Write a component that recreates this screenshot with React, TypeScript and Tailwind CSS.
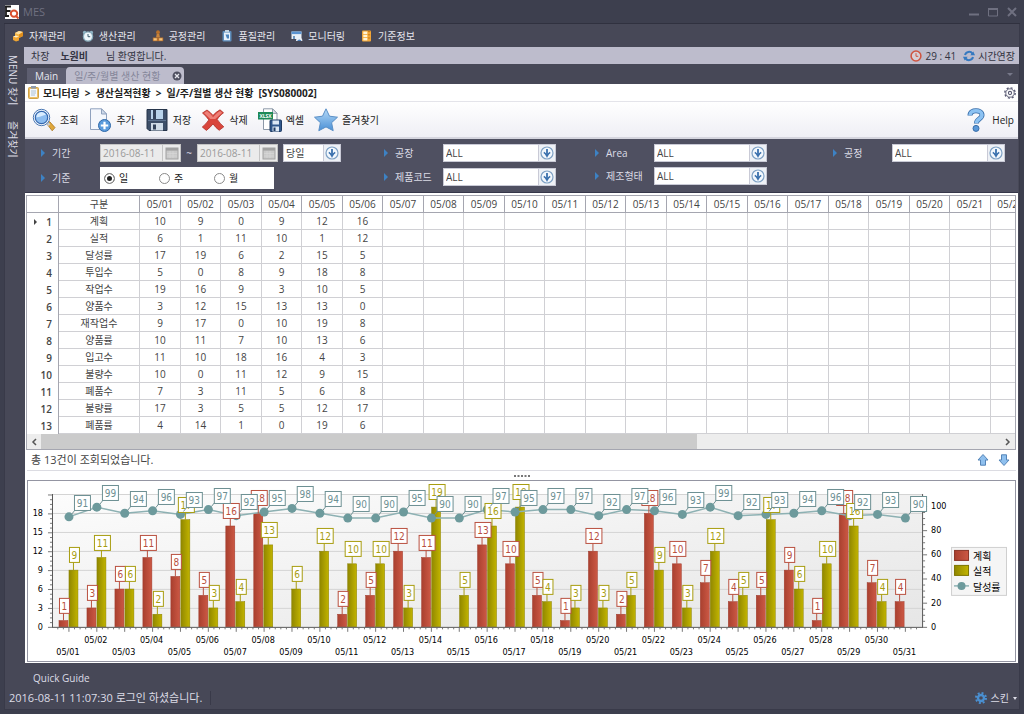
import { useState } from 'react';
import type { ReactNode } from 'react';

const menuItems = [
  { label: '자재관리', icon: <BoxIcon /> },
  { label: '생산관리', icon: <AlarmIcon /> },
  { label: '공정관리', icon: <ProcessIcon /> },
  { label: '품질관리', icon: <QualityIcon /> },
  { label: '모니터링', icon: <MonitorIcon /> },
  { label: '기준정보', icon: <BaseIcon /> },
];

const tools = [
  { label: '조회', icon: <SearchIcon /> },
  { label: '추가', icon: <AddIcon /> },
  { label: '저장', icon: <SaveIcon /> },
  { label: '삭제', icon: <DeleteIcon /> },
  { label: '엑셀', icon: <ExcelIcon /> },
  { label: '즐겨찾기', icon: <StarIcon /> },
];

const days = Array.from({ length: 31 }, (_, i) => `05/${String(i + 1).padStart(2, '0')}`);

const rows: { name: string; values: number[] }[] = [
  { name: '계획', values: [10, 9, 0, 9, 12, 16] },
  { name: '실적', values: [6, 1, 11, 10, 1, 12] },
  { name: '달성률', values: [17, 19, 6, 2, 15, 5] },
  { name: '투입수', values: [5, 0, 8, 9, 18, 8] },
  { name: '작업수', values: [19, 16, 9, 3, 10, 5] },
  { name: '양품수', values: [3, 12, 15, 13, 13, 0] },
  { name: '재작업수', values: [9, 17, 0, 10, 19, 8] },
  { name: '양품률', values: [10, 11, 7, 10, 13, 6] },
  { name: '입고수', values: [11, 10, 18, 16, 4, 3] },
  { name: '불량수', values: [10, 0, 11, 12, 9, 15] },
  { name: '폐품수', values: [7, 3, 11, 5, 6, 8] },
  { name: '불량률', values: [17, 3, 5, 5, 12, 17] },
  { name: '폐품률', values: [4, 14, 1, 0, 19, 6] },
];

const plan = [1, 3, 6, 11, 8, 5, 16, 18, 0, 0, 2, 5, 12, 11, 0, 13, 10, 5, 1, 12, 2, 18, 10, 7, 4, 5, 9, 1, 18, 7, 4];
const actual = [9, 11, 6, 2, 17, 3, 4, 13, 6, 12, 10, 10, 3, 19, 5, 16, 19, 4, 3, 3, 5, 9, 3, 12, 5, 17, 6, 10, 16, 4, 0];
const rate = [
  91, 99, 94, 96, 93, 97, 92, 95, 98, 94, 90, 90, 95, 90, 90, 97, 95, 97, 97, 92, 97, 96, 93, 99, 92, 93, 94, 96, 92,
  93, 90,
];

/* ---------- menu icons ---------- */

function BoxIcon() {
  return (
    <svg viewBox="0 0 12 12" className="h-3 w-3">
      <path d="M3 3l4-2 4 1v4L7 8 3 6z" fill="#f5b544" />
      <path d="M3 3l4 1.4L11 2 7 1z" fill="#fde0a0" />
      <path d="M7 4.4V8l4-2V2z" fill="#e08e1c" />
      <path d="M1 6.4l3-1 3 1.4v3.6L4 11.6 1 10z" fill="#f0a532" />
      <path d="M1 6.4l3 1.2 3-.8-3-1.4z" fill="#fff0c8" />
    </svg>
  );
}

function AlarmIcon() {
  return (
    <svg viewBox="0 0 12 12" className="h-3 w-3">
      <circle cx="2.6" cy="2.4" r="1.7" fill="#8fb3c4" />
      <circle cx="9.4" cy="2.4" r="1.7" fill="#8fb3c4" />
      <circle cx="6" cy="6.5" r="4.6" fill="#eef6fa" stroke="#8aaebd" strokeWidth="1.3" />
      <path d="M6 4v2.7h2.2" fill="none" stroke="#3d5c6c" />
    </svg>
  );
}

function ProcessIcon() {
  return (
    <svg viewBox="0 0 12 12" className="h-3 w-3">
      <path d="M4.8 3.500h2.400l.8 4H4z" fill="#c9833a" />
      <circle cx="6" cy="2.200" r="1.900" fill="#b8702a" />
      <path d="M.8 7.500h10.400v3.700H.8z" fill="#b9712c" />
      <path d="M1.600 8.300h3.200v2.200H1.600zM7.200 8.300h3.200v2.200H7.200z" fill="#f4c47c" />
    </svg>
  );
}

function QualityIcon() {
  return (
    <svg viewBox="0 0 12 12" className="h-3 w-3">
      <rect x="1.5" y="1" width="9" height="10.5" rx="1" fill="#5f8fbd" />
      <rect x="3" y="2.6" width="6" height="7.6" fill="#e8f1fa" />
      <rect x="4" y="0" width="4" height="2.2" fill="#c3d4e2" />
      <path d="M4.5 4.500h3.500v4H6z" fill="#4c84bc" />
    </svg>
  );
}

function MonitorIcon() {
  return (
    <svg viewBox="0 0 12 12" className="h-3 w-3">
      <rect x=".5" y="1.5" width="10" height="7.5" fill="#e9eff6" />
      <rect x=".5" y="1.5" width="10" height="2.6" fill="#5b93d0" />
      <path d="M2 9V6h2v3z" fill="#6f97bf" />
      <path d="M5 11a3.200 3.200 0 0 1 6.400 0z" fill="#e9eff6" />
      <path d="M6.200 11a2.200 2.200 0 0 1 4.200 0z" fill="#4c7fb8" />
    </svg>
  );
}

function BaseIcon() {
  return (
    <svg viewBox="0 0 12 12" className="h-3 w-3">
      <rect x="1" y=".5" width="9" height="11" rx="1" fill="#f3a83a" />
      <rect x="2.3" y="1.6" width="4" height="2.4" fill="#fff4d6" />
      <rect x="2.3" y="4.8" width="4" height="2.4" fill="#fff4d6" />
      <rect x="2.3" y="8" width="4" height="2.4" fill="#fff4d6" />
      <path d="M7 1.6h2.2M7 4.8h2.2M7 8h2.2" stroke="#c97a16" />
    </svg>
  );
}

/* ---------- toolbar icons ---------- */

function SearchIcon() {
  return (
    <svg viewBox="0 0 24 24" className="h-6 w-6">
      <path d="M15 16l2.6-2.4 5.4 6-2.8 3.2z" fill="#e0a83c" stroke="#a8731f" strokeWidth=".8" />
      <path d="M14.5 15.6l1.8-1.6 2 2.2-1.8 1.8z" fill="#c9ccd2" />
      <circle cx="9.5" cy="9.5" r="8.2" fill="#f0f5fb" stroke="#4b78b4" strokeWidth="1" />
      <circle cx="9.5" cy="9.5" r="6.2" fill="#8dbdf0" stroke="#3467ae" strokeWidth="1.2" />
      <path d="M4.4 9.2a5.1 5.1 0 0 1 9.6-2.4c-3 .2-5.800 3-9.600 2.400z" fill="#d8ecff" />
    </svg>
  );
}

function AddIcon() {
  return (
    <svg viewBox="0 0 24 24" className="h-6 w-6">
      <path d="M2.500 .8h11l5 5.200v15.500h-16z" fill="#f4f7fc" stroke="#8fa2be" />
      <path d="M13.500 .8v5.200h5z" fill="#cfdaea" stroke="#8fa2be" />
      <circle cx="16.500" cy="17.500" r="6" fill="#5a9bdc" stroke="#2f68a8" />
      <path d="M16.500 13.800v7.400M12.800 17.500h7.400" stroke="#fff" strokeWidth="2.200" />
    </svg>
  );
}

function SaveIcon() {
  return (
    <svg viewBox="0 0 24 24" className="h-6 w-6">
      <path d="M2 1.500h20v21H4L2 20.500z" fill="#3d4f69" stroke="#26354b" />
      <rect x="6" y="2" width="12" height="9" fill="#b9d3ea" />
      <rect x="8" y="2" width="3" height="9" fill="#33435b" />
      <path d="M3 12.500h18" stroke="#5f7592" />
      <rect x="6" y="15" width="12" height="7.500" fill="#cfdce8" />
      <rect x="8" y="16.500" width="3" height="5" fill="#33435b" />
    </svg>
  );
}

function DeleteIcon() {
  return (
    <svg viewBox="0 0 24 24" className="h-6 w-6">
      <path
        d="M1.500 5L6 2c2.200 1.400 4.200 3.200 6 5.400 2-2.300 4.300-4.100 7-5.600l3.500 3c-2.400 1.800-4.500 3.900-6.300 6.600 1.800 2.800 4 5.200 6.600 7.400l-4.600 3.500c-2.400-1.800-4.400-3.900-6.200-6.400-2 2.500-4 4.600-6.600 6.500L1.300 19c2.600-2 4.700-4.300 6.500-7.100C6.100 9.300 4 7 1.500 5z"
        fill="#d9453c"
        stroke="#b03028"
        strokeWidth=".8"
      />
      <path d="M3 5l3-1.900c2.400 1.800 4.300 3.700 6 6.200 2.100-2.700 4.400-4.700 7-6.400l2.200 1.900-7 6.200H9.300z" fill="#ee8078" />
    </svg>
  );
}

function ExcelIcon() {
  return (
    <svg viewBox="0 0 24 24" className="h-6 w-6">
      <path d="M5.500 .8h9l4.500 4.500v16.200h-13.500z" fill="#fff" stroke="#8d99a8" />
      <path d="M14.500 .8v4.500h4.500z" fill="#dfe5ec" stroke="#8d99a8" />
      <rect x="0" y="4" width="15" height="7.500" fill="#1e8a57" />
      <text x="7.500" y="9.600" fill="#ffffff" textAnchor="middle" className="text-[5px] font-bold">
        XLSX
      </text>
      <rect x="12" y="12" width="11.500" height="11.500" rx="1" fill="#31588c" stroke="#1f3b63" />
      <rect x="14.500" y="12.500" width="6.500" height="4" fill="#dce8f5" />
      <rect x="14.500" y="18.500" width="6.500" height="5" fill="#dce8f5" />
      <rect x="15.500" y="19.500" width="2" height="3.500" fill="#1f3b63" />
    </svg>
  );
}

function StarIcon() {
  return (
    <svg viewBox="0 0 24 24" className="h-6 w-6">
      <defs>
        <linearGradient id="star" x1="0" y1="0" x2="0" y2="1">
          <stop offset="0" stopColor="#b5daf8" />
          <stop offset="1" stopColor="#4b90d6" />
        </linearGradient>
      </defs>
      <path
        d="M12 .8l3.500 7.400 8 1-5.900 5.500 1.600 8L12 18.900l-7.200 3.800 1.600-8L.5 9.200l8-1z"
        fill="url(#star)"
        stroke="#5a8fc6"
        strokeLinejoin="round"
      />
    </svg>
  );
}

function HelpIcon() {
  return (
    <svg viewBox="0 0 18 24" className="h-6 w-[18px]">
      <path d="M3 7.600C3 4 6 2.800 9 2.800s6 1.400 6 4.200c0 4-5.600 4-5.600 8.400" fill="none" stroke="#386da8" strokeWidth="5" />
      <path d="M3 7.200C3 4 6 2.800 9 2.800s6 1.400 6 4.200c0 4-5.600 4-5.600 8" fill="none" stroke="#8cc2f2" strokeWidth="3.600" />
      <circle cx="9" cy="20.400" r="3" fill="#5a98d8" stroke="#386da8" />
    </svg>
  );
}

/* ---------- small icons ---------- */

function LogoIcon() {
  return (
    <svg viewBox="0 0 14 14" className="h-[14px] w-[14px]">
      <rect width="14" height="14" fill="#fff" />
      <path d="M0 1.500h6M1 6h4.500M0 11h4M1 1.500V11" stroke="#1c1c1c" strokeWidth="1.800" />
      <circle cx="9" cy="8.600" r="3.200" fill="none" stroke="#d9502e" strokeWidth="2" />
      <path d="M10.500 10.500L13.500 13.500" stroke="#d9502e" strokeWidth="2" />
    </svg>
  );
}

function ClipboardIcon() {
  return (
    <svg viewBox="0 0 11 13" className="h-[13px] w-[11px]">
      <rect x=".5" y="1.500" width="10" height="11" rx="1" fill="#edc069" stroke="#d0a347" />
      <rect x="2" y="3" width="7" height="8" fill="#f4f8fc" />
      <rect x="3" y="0" width="5" height="2.600" fill="#8f9bab" />
      <path d="M3 5h5M3 7h5M3 9h4" stroke="#9db3c9" strokeWidth=".8" />
    </svg>
  );
}

function ClockIcon() {
  return (
    <svg viewBox="0 0 12 12" className="h-3 w-3">
      <circle cx="6" cy="6" r="4.900" fill="#d6cfd6" stroke="#cf5440" strokeWidth="1.500" />
      <path d="M6 3.200V6.300h2.300" fill="none" stroke="#cf5440" />
    </svg>
  );
}

function RefreshIcon() {
  return (
    <svg viewBox="0 0 12 12" className="h-3 w-3">
      <path d="M2 5a4.200 4.200 0 0 1 7.500-1.400M10 7a4.200 4.200 0 0 1-7.500 1.400" fill="none" stroke="#3579c0" strokeWidth="2" />
      <path d="M7.300 5.200H12L10.300 1.400zM4.700 6.800H0l1.700 3.800z" fill="#3579c0" />
    </svg>
  );
}

function GearIcon({ solid }: { solid?: boolean }) {
  return (
    <svg viewBox="0 0 12 12" className="h-3 w-3">
      {solid ? (
        <>
          <circle cx="6" cy="6" r="5" fill="none" stroke="#4a8fd0" strokeWidth="2" strokeDasharray="1.963 1.963" />
          <circle cx="6" cy="6" r="3" fill="none" stroke="#4a8fd0" strokeWidth="2.400" />
        </>
      ) : (
        <>
          <circle cx="6" cy="6" r="5.200" fill="none" stroke="#5a5b74" strokeWidth="1.400" strokeDasharray="2.040 2.040" />
          <circle cx="6" cy="6" r="4.200" fill="none" stroke="#5a5b74" strokeWidth=".9" />
          <circle cx="6" cy="6" r="1.600" fill="none" stroke="#5a5b74" strokeWidth="1.100" />
        </>
      )}
    </svg>
  );
}

function CalendarIcon() {
  return (
    <svg viewBox="0 0 14 13" className="h-[13px] w-[14px]">
      <rect x="1" y="1" width="12" height="11" fill="#c9c9c9" stroke="#a2a2a2" />
      <rect x="1" y="1" width="12" height="2.600" fill="#a2a2a2" />
      <path d="M2 6.500h10M2 9h10M5 4v7M8 4v7" stroke="#dadada" strokeWidth=".6" />
    </svg>
  );
}

function DropIcon() {
  return (
    <svg viewBox="0 0 14 14" className="h-[14px] w-[14px]">
      <circle cx="7" cy="7" r="6" fill="#f3f8fd" stroke="#7ea1c4" strokeWidth="1.200" />
      <path d="M7 3v7" stroke="#3a70ad" strokeWidth="1.800" />
      <path d="M3.800 6.400Q5.500 7.400 7 10.200q1.500-2.800 3.200-3.800" fill="none" stroke="#3a70ad" strokeWidth="1.600" />
    </svg>
  );
}

function ArrowIcon({ down }: { down?: boolean }) {
  return (
    <svg viewBox="0 0 12 12" className="h-3 w-3">
      <path
        d={down ? 'M6 11.500L1 6h2.500V.8h5V6H11z' : 'M6 .5L1 6h2.500v5.200h5V6H11z'}
        fill="#8fc0ee"
        stroke="#5585b8"
        strokeLinejoin="round"
      />
    </svg>
  );
}

/* ---------- filter parts ---------- */

function FieldLabel({ htmlFor, children }: { htmlFor?: string; children: ReactNode }) {
  return (
    <label htmlFor={htmlFor} className="flex w-[63px] shrink-0 items-center gap-[7px] pl-1 text-[#dcdce6]">
      <svg viewBox="0 0 4 8" className="h-2 w-1">
        <path d="M0 0l4 4-4 4z" fill="#3d82c4" />
      </svg>
      {children}
    </label>
  );
}

function Select({ id, label, options, narrow }: { id: string; label?: string; options: string[]; narrow?: boolean }) {
  return (
    <div className={narrow ? 'relative h-[18px] w-[58px]' : 'relative h-[18px] w-[113px]'}>
      <select
        id={id}
        aria-label={label}
        className="h-full w-full appearance-none border border-[#c9cad6] bg-white pl-[2px] text-[#444]"
      >
        {options.map((o) => (
          <option key={o}>{o}</option>
        ))}
      </select>
      <span className="pointer-events-none absolute inset-y-px right-px flex w-[17px] items-center justify-center border-l border-[#c9cad6] bg-[#eef1f6]">
        <DropIcon />
      </span>
    </div>
  );
}

function DateBox({ label }: { label: string }) {
  return (
    <div className="flex h-[18px] w-[81px] border border-[#c4c4c4] bg-[#ebebeb]">
      <input aria-label={label} defaultValue="2016-08-11" disabled className="w-full min-w-0 pl-[2px] text-[#9a9a9a]" />
      <button aria-label="달력" className="flex w-[18px] shrink-0 items-center justify-center border-l border-[#c4c4c4]">
        <CalendarIcon />
      </button>
    </div>
  );
}

function Filters() {
  const [unit, setUnit] = useState('일');

  return (
    <section className="grid grid-cols-[343fr_211fr_238fr_189fr] border-b border-[#36374a] bg-[#4f5061] pt-[5px] pb-[3px] pl-3">
      <div className="flex flex-col gap-[5px]">
        <div className="flex h-[18px] items-center">
          <FieldLabel>기간</FieldLabel>
          <div className="flex items-center text-[#dcdce6]">
            <DateBox label="시작일" />
            <span className="w-4 text-center">~</span>
            <DateBox label="종료일" />
            <div className="w-[5px]" />
            <Select id="period" label="기간 선택" options={['당일', '주간', '월간']} narrow />
          </div>
        </div>
        <div className="flex h-[22px] items-center">
          <FieldLabel>기준</FieldLabel>
          <div className="flex h-[22px] w-[174px] items-center bg-white pl-1 text-[#222]">
            {['일', '주', '월'].map((u) => (
              <label key={u} className="flex w-[55px] items-center gap-1">
                <input
                  type="radio"
                  name="unit"
                  checked={unit === u}
                  onChange={() => setUnit(u)}
                  className="h-[11px] w-[11px] appearance-none rounded-full border border-[#8a8a8a] bg-white checked:bg-[#222] checked:shadow-[inset_0_0_0_2px_#fff]"
                />
                {u}
              </label>
            ))}
          </div>
        </div>
      </div>
      <div className="flex flex-col gap-[6px]">
        <div className="flex h-[18px] items-center">
          <FieldLabel htmlFor="factory">공장</FieldLabel>
          <Select id="factory" options={['ALL']} />
        </div>
        <div className="flex h-[18px] items-center">
          <FieldLabel htmlFor="product">제품코드</FieldLabel>
          <Select id="product" options={['ALL']} />
        </div>
      </div>
      <div className="flex flex-col gap-[5px]">
        <div className="flex h-[18px] items-center">
          <FieldLabel htmlFor="area">Area</FieldLabel>
          <Select id="area" options={['ALL']} />
        </div>
        <div className="flex h-[18px] items-center">
          <FieldLabel htmlFor="form">제조형태</FieldLabel>
          <Select id="form" options={['ALL']} />
        </div>
      </div>
      <div className="flex h-[18px] items-center">
        <FieldLabel htmlFor="process">공정</FieldLabel>
        <Select id="process" options={['ALL']} />
      </div>
    </section>
  );
}

/* ---------- grid ---------- */

function DataGrid() {
  return (
    <section className="mt-[2px] mr-[2px] ml-px border border-[#a5a6b0] bg-white">
      <div className="overflow-hidden">
        <table className="w-max table-fixed border-separate border-spacing-0 text-center text-[#444]">
          <colgroup>
            <col className="w-[32px]" />
            <col className="w-[81px]" />
            {days.map((d, i) => (
              <col key={d} className={i % 2 ? 'w-[40px]' : 'w-[41px]'} />
            ))}
          </colgroup>
          <thead>
            <tr className="h-[17px]">
              <th className="border-r border-b border-[#a5a6b0]" />
              <th className="border-r border-b border-[#a5a6b0] p-0 font-normal">구분</th>
              {days.map((d) => (
                <th key={d} className="border-r border-b border-[#a5a6b0] p-0 font-normal">
                  {d}
                </th>
              ))}
            </tr>
          </thead>
          <tbody>
            {rows.map((row, i) => (
              <tr key={row.name} className="h-[17px]">
                <th className="border-r border-[#a5a6b0] p-0 pr-[6px] text-right font-semibold text-[#444]">
                  <span className="flex items-center justify-end gap-[9px]">
                    {i === 0 && (
                      <svg viewBox="0 0 3 6" className="h-[6px] w-[3px]">
                        <path d="M0 0l3 3-3 3z" fill="#444" />
                      </svg>
                    )}
                    {i + 1}
                  </span>
                </th>
                <td className="border-r border-b border-[#d0d0d4] p-0">{row.name}</td>
                {days.map((d, j) => (
                  <td key={d} className="border-r border-b border-[#d0d0d4] p-0">
                    {row.values[j]}
                  </td>
                ))}
              </tr>
            ))}
          </tbody>
        </table>
      </div>
      <div className="flex h-[15px] items-stretch bg-[#ededed]">
        <button aria-label="왼쪽" className="flex w-[14px] items-center justify-center">
          <svg viewBox="0 0 6 8" className="h-2 w-[6px]">
            <path d="M5 1L2 4l3 3" fill="none" stroke="#555" strokeWidth="1.500" />
          </svg>
        </button>
        <div className="flex-1">
          <div className="h-full w-[68.3%] bg-[#cbcbcb]" />
        </div>
        <button aria-label="오른쪽" className="flex w-[14px] items-center justify-center">
          <svg viewBox="0 0 6 8" className="h-2 w-[6px]">
            <path d="M1 1l3 3-3 3" fill="none" stroke="#555" strokeWidth="1.500" />
          </svg>
        </button>
      </div>
    </section>
  );
}

/* ---------- chart ---------- */

const BASE = 146;
const cx = (i: number) => 41 + i * 27.91;
const barY = (v: number) => BASE - v * 6.31;
const rateY = (v: number) => BASE - v * 1.21;

function Tag({ x, y, value, color }: { x: number; y: number; value: number; color: string }) {
  const w = value > 9 ? 16 : 10;
  return (
    <g>
      <rect x={Math.round(x - w / 2) + 0.5} y={Math.round(y - 7) - 0.5} width={w} height={15} fill="#fff" stroke={color} />
      <text x={Math.round(x - w / 2) + 0.5 + w / 2} y={Math.round(y) + 4} textAnchor="middle" fill={color} className="text-[10px]">
        {value}
      </text>
    </g>
  );
}

function Chart() {
  return (
    <svg
      viewBox="0 0 988 180"
      className="block w-full font-['DejaVu_Sans_Condensed','Noto_Sans','Noto_Sans_CJK_KR',sans-serif] text-[9px]"
    >
      <defs>
        <linearGradient id="plot" x1="0" y1="0" x2="1" y2="1">
          <stop offset="0" stopColor="#fcfcfc" />
          <stop offset="1" stopColor="#e6e6e6" />
        </linearGradient>
        <linearGradient id="red">
          <stop offset="0" stopColor="#a9402f" />
          <stop offset="1" stopColor="#cc5844" />
        </linearGradient>
        <linearGradient id="olive">
          <stop offset="0" stopColor="#908700" />
          <stop offset="1" stopColor="#c2b400" />
        </linearGradient>
      </defs>

      <rect x="24" y="13" width="871" height="133" fill="url(#plot)" />
      {[3, 6, 9, 12, 15, 18, 21].map((v) => (
        <line key={v} x1="24" x2="895" y1={Math.round(barY(v)) + 0.5} y2={Math.round(barY(v)) + 0.5} stroke="#d4d4d4" />
      ))}

      {days.map((d, i) => (
        <g key={d}>
          {plan[i] > 0 && (
            <rect x={Math.round(cx(i)) - 10} y={barY(plan[i])} width="9" height={BASE - barY(plan[i])} fill="url(#red)" stroke="#a03a2c" strokeWidth=".5" />
          )}
          {actual[i] > 0 && (
            <rect x={Math.round(cx(i))} y={barY(actual[i])} width="9" height={BASE - barY(actual[i])} fill="url(#olive)" stroke="#8a8000" strokeWidth=".5" />
          )}
        </g>
      ))}

      {/* axes */}
      <path d="M24.500 13V146.500M895.500 13V146.500M24 146.500H896" fill="none" stroke="#555" />
      {Array.from({ length: 29 }, (_, i) => i * 0.75).map((v) => (
        <line key={v} x1={v % 3 ? 22 : 20} x2="24" y1={barY(v) + 0.5} y2={barY(v) + 0.5} stroke="#555" strokeWidth=".8" />
      ))}
      {Array.from({ length: 22 }, (_, i) => i * 5).map((v) => (
        <line key={v} x1="896" x2={v % 20 ? 898 : 900} y1={rateY(v) + 0.5} y2={rateY(v) + 0.5} stroke="#555" strokeWidth=".8" />
      ))}
      {Array.from({ length: 155 }, (_, i) => i).map((n) => (
        <line key={n} x1={29.8 + n * 5.582} x2={29.8 + n * 5.582} y1="147" y2={n % 5 === 2 ? 151 : 148.5} stroke="#555" strokeWidth=".8" />
      ))}
      {[0, 3, 6, 9, 12, 15, 18].map((v) => (
        <text key={v} x="15" y={barY(v) + 3} textAnchor="end">
          {v}
        </text>
      ))}
      {[0, 20, 40, 60, 80, 100].map((v) => (
        <text key={v} x="904" y={rateY(v) + 3}>
          {v}
        </text>
      ))}
      {days.map((d, i) => (
        <text key={d} x={cx(i) - 1} y={i % 2 ? 162 : 174} textAnchor="middle">
          {d}
        </text>
      ))}

      <polyline points={rate.map((v, i) => `${cx(i)},${rateY(v)}`).join(' ')} fill="none" stroke="#8db1b3" strokeWidth="1.500" />
      {rate.map((v, i) => (
        <circle key={i} cx={cx(i)} cy={rateY(v)} r="4.500" fill="#6d9a9c" />
      ))}

      {plan.map((v, i) =>
        v > 0 ? (
          <g key={i}>
            <line x1={Math.round(cx(i)) - 5.5} x2={Math.round(cx(i)) - 5.5} y1={barY(v) - 8} y2={barY(v)} stroke="#b9503f" />
            <Tag x={Math.round(cx(i)) - 5} y={barY(v) - 15} value={v} color="#b9503f" />
          </g>
        ) : null
      )}
      {actual.map((v, i) =>
        v > 0 ? (
          <g key={i}>
            <line x1={Math.round(cx(i)) + 4.5} x2={Math.round(cx(i)) + 4.5} y1={barY(v) - 8} y2={barY(v)} stroke="#a89d10" />
            <Tag x={Math.round(cx(i)) + 5} y={barY(v) - 15} value={v} color="#a89d10" />
          </g>
        ) : null
      )}
      {rate.map((v, i) => (
        <g key={i}>
          <line x1={cx(i) + 3} y1={rateY(v) - 3} x2={cx(i) + 7} y2={rateY(v) - 8} stroke="#6d9093" />
          <Tag x={cx(i) + 13} y={rateY(v) - 14} value={v} color="#6d9093" />
        </g>
      ))}

      {/* legend */}
      <rect x="924.500" y="66.500" width="55" height="48" fill="#f5f5f5" stroke="#cfcfcf" />
      <rect x="927.500" y="69.500" width="14" height="10" fill="url(#red)" stroke="#8a3527" />
      <rect x="927.500" y="84.500" width="14" height="10" fill="url(#olive)" stroke="#7d7400" />
      <path d="M927 105h15" stroke="#8db1b3" strokeWidth="1.500" />
      <circle cx="934.500" cy="105" r="4" fill="#6d9a9c" />
      <g className="text-[10px]">
        <text x="946" y="79">계획</text>
        <text x="946" y="94">실적</text>
        <text x="946" y="110">달성률</text>
      </g>
    </svg>
  );
}

export default function App() {
  return (
    <div className="flex min-h-screen flex-col bg-[#3d3f4e] px-1 font-['Open_Sans','Noto_Sans_CJK_KR',sans-serif] text-[10px] leading-[14px]">
      <header className="flex h-6 items-center gap-1 border-b border-[#30313f] pl-px">
        <LogoIcon />
        <h1 className="flex-1 text-[11px] text-[#6f7080]">MES</h1>
        <div className="flex gap-[9px] pr-[3px] text-[#6f7080]">
          <button aria-label="최소화">
            <svg viewBox="0 0 10 10" className="h-[10px] w-[10px]">
              <path d="M0 7.500h10" stroke="currentColor" strokeWidth="2" />
            </svg>
          </button>
          <button aria-label="최대화">
            <svg viewBox="0 0 10 10" className="h-[10px] w-[10px]">
              <path d="M.5 1v8h9V1" fill="none" stroke="currentColor" />
              <path d="M0 2h10" stroke="currentColor" strokeWidth="2" />
            </svg>
          </button>
          <button aria-label="닫기">
            <svg viewBox="0 0 10 10" className="h-[10px] w-[10px]">
              <path d="M1 1l8 8M9 1L1 9" stroke="currentColor" strokeWidth="2" />
            </svg>
          </button>
        </div>
      </header>

      <div className="mb-1 flex flex-1 flex-col border-x border-b border-[#393a49] bg-[#474857]">
        <nav className="flex h-[23px] items-center gap-4 pl-[7px] text-[#e6e6ee]">
          {menuItems.map((m) => (
            <button key={m.label} className="flex items-center gap-[5px]">
              {m.icon}
              {m.label}
            </button>
          ))}
        </nav>

        <div className="flex">
          <aside className="flex w-[19px] shrink-0 flex-col items-center gap-4 pt-2 pr-[3px] text-[#dcdce6]">
            <button className="[text-orientation:sideways] [writing-mode:vertical-rl]">MENU 찾기</button>
            <button className="[text-orientation:sideways] [writing-mode:vertical-rl]">즐겨찾기</button>
          </aside>

          <div className="min-w-0 flex-1">
            <div className="flex h-[17px] items-center bg-[#bdbccc] pr-1 pl-[7px] text-[#333442]">
              <span>차장</span>
              <b className="ml-[11px] font-bold">노원비</b>
              <span className="ml-[18px] flex-1">님 환영합니다.</span>
              <ClockIcon />
              <span className="mr-[7px] ml-[3px]">29 : 41</span>
              <button className="flex items-center gap-[3px]">
                <RefreshIcon />
                시간연장
              </button>
            </div>

            <div className="flex h-5 items-end pl-[3px]">
              <button className="h-4 bg-[#5d5e70] px-2 text-[#e6e6ee]">Main</button>
              <button className="flex h-[17px] items-center gap-3 rounded-t-sm bg-[#bdbccc] pr-[2px] pl-2 text-[#85869a]">
                일/주/월별 생산 현황
                <svg viewBox="0 0 10 10" className="h-[10px] w-[10px]">
                  <circle cx="5" cy="5" r="4.500" fill="#4f5061" />
                  <path d="M3 3l4 4M7 3L3 7" stroke="#e6e6ee" strokeWidth="1.300" />
                </svg>
              </button>
              <svg viewBox="0 0 6 3" className="mr-[6px] mb-2 ml-auto h-[3px] w-[6px]">
                <path d="M0 0h6L3 3z" fill="#777889" />
              </svg>
            </div>

            <main className="mr-px ml-px bg-white pb-px">
              <div className="flex h-[17px] items-center gap-1 pr-[2px] pl-[3px] text-[#222]">
                <ClipboardIcon />
                <h2 className="flex flex-1 gap-[5px] font-bold">
                  <span>모니터링</span>
                  <span>&gt;</span>
                  <span>생산실적현황</span>
                  <span>&gt;</span>
                  <span>일/주/월별 생산 현황</span>
                  <span>[SYS080002]</span>
                </h2>
                <button aria-label="설정">
                  <GearIcon />
                </button>
              </div>

              <div className="flex h-[38px] items-center gap-[10px] border-t border-b-2 border-t-[#e4e4ea] border-b-[#d5d5de] bg-gradient-to-b from-white to-[#efeff5] pr-1 pl-[7px] text-[#222]">
                {tools.map((t) => (
                  <button key={t.label} className="flex items-center gap-1">
                    {t.icon}
                    {t.label}
                  </button>
                ))}
                <button className="ml-auto flex items-center gap-[7px]">
                  <HelpIcon />
                  Help
                </button>
              </div>

              <Filters />
              <DataGrid />

              <div className="mx-[2px] flex h-[21px] items-center border-b border-[#dcdce2] pr-[6px] pl-1 text-[#444]">
                <p className="flex-1 text-[11px]">총 13건이 조회되었습니다.</p>
                <div className="flex gap-[9px]">
                  <button aria-label="위로">
                    <ArrowIcon />
                  </button>
                  <button aria-label="아래로">
                    <ArrowIcon down />
                  </button>
                </div>
              </div>
              <div className="flex h-[9px] items-center justify-center">
                <svg viewBox="0 0 16 2" className="h-[2px] w-4">
                  <path d="M0 1h16" stroke="#777" strokeWidth="2" strokeDasharray="2 1.500" />
                </svg>
              </div>
              <section className="mx-[2px] border border-[#9495a2] bg-white">
                <Chart />
              </section>
            </main>
          </div>
        </div>

        <footer className="mt-auto text-[#dcdce6]">
          <div className="flex h-[26px] items-center pl-7">
            <a href="#guide">Quick Guide</a>
          </div>
          <div className="flex h-[18px] items-start justify-between pr-[2px] pl-1">
            <p className="border-r border-[#393a49] pr-2 text-[11px]">2016-08-11 11:07:30 로그인 하셨습니다.</p>
            <button className="flex items-center gap-1">
              <GearIcon solid />
              스킨
              <svg viewBox="0 0 4 3" className="h-[3px] w-1">
                <path d="M0 0h4L2 3z" fill="#dcdce6" />
              </svg>
            </button>
          </div>
        </footer>
      </div>
    </div>
  );
}
